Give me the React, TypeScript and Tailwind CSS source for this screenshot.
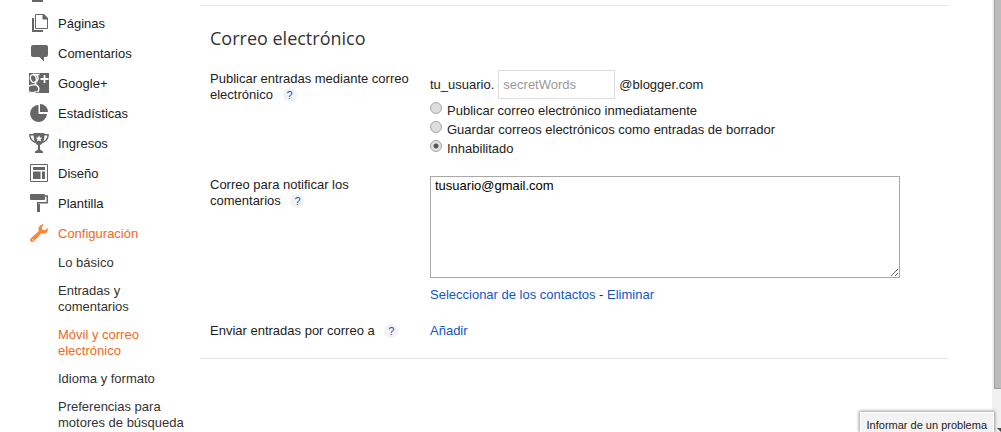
import { useState } from "react";
import type { ReactNode } from "react";

type NavItem = {
  label: string;
  icon: ReactNode;
  active?: boolean;
};

const navItems: NavItem[] = [
  {
    label: "Páginas",
    icon: (
      <>
        <path d="M3 5h2v12h9v2H3z" fill="currentColor" />
        <path d="M6.500 1.500h8l4 4v10h-12z" fill="none" stroke="currentColor" />
        <path d="M13.500 1H15l4 4v1.500h-5.500z" fill="currentColor" />
      </>
    ),
  },
  {
    label: "Comentarios",
    icon: (
      <path
        d="M4 2h13a2 2 0 0 1 2 2v8a2 2 0 0 1-2 2h-2v4.500L10.500 14H4a2 2 0 0 1-2-2V4a2 2 0 0 1 2-2z"
        fill="currentColor"
      />
    ),
  },
  {
    label: "Google+",
    icon: (
      <>
        <path d="M0 0h20v20H0z" fill="currentColor" />
        <g fill="none" stroke="#fff">
          <ellipse cx="4.300" cy="5.500" rx="2.900" ry="4" strokeWidth="1.300" transform="rotate(-14 4.300 5.500)" />
          <path d="M4 1.500h6.500M7.500 2c2.200 2.200 1.800 4.600.2 6.200-1.900 1.900-2 2.600.2 4.200 2.300 1.700 2.600 4.600.6 6.800" strokeWidth="1.500" />
          <path d="M0 13.200c2-1.200 4.200-1.400 6.500-1.200M0 18.800c2.200 1 5.500.9 7.500-.6" strokeWidth="1.300" />
          <path d="M15.500 2v8M11.500 6h8" strokeWidth="1.800" />
        </g>
      </>
    ),
  },
  {
    label: "Estadísticas",
    icon: (
      <>
        <path d="M9.500 2v9H18a8.500 8.500 0 1 1-8.500-9z" fill="currentColor" />
        <path d="M11 1a8 8 0 0 1 8 8h-8z" fill="currentColor" />
      </>
    ),
  },
  {
    label: "Ingresos",
    icon: (
      <>
        <path d="M4.500 0h11c0 6-1 11-4.500 12v4.500l3 2V20H6v-1.500l3-2V12C5.500 11 4.500 6 4.500 0z" fill="currentColor" />
        <path d="M5 1.700H.8C1 5 2.500 8 6.500 9.500M15 1.700h4.200C19 5 17.500 8 13.500 9.500" fill="none" stroke="currentColor" strokeWidth="1.400" />
        <path d="m10 2.300 1 2.100 2.300.3-1.700 1.600.5 2.300L10 7.400 7.900 8.600l.5-2.300-1.700-1.600 2.300-.3z" fill="#fff" />
      </>
    ),
  },
  {
    label: "Diseño",
    icon: (
      <>
        <path d="M1.500 1.500h17v17h-17z" fill="none" stroke="currentColor" />
        <path d="M4 4h12v3H4zM4 8.500h7.500V16H4zM13 8.500h3V16h-3z" fill="currentColor" />
      </>
    ),
  },
  {
    label: "Plantilla",
    icon: (
      <>
        <path d="M2 1h13a1 1 0 0 1 1 1v4a1 1 0 0 1-1 1H2a1 1 0 0 1-1-1V2a1 1 0 0 1 1-1zM8 11h3v8H8z" fill="currentColor" />
        <path d="M16 3h2.300v6.800H8.700V13" fill="none" stroke="currentColor" strokeWidth="1.500" />
      </>
    ),
  },
  {
    label: "Configuración",
    active: true,
    icon: (
      <path
        d="M15 1.200 12.800 4l.4 2.500 2.600.7 3-2.200c.5 3-1.400 5.600-4.300 5.700-1 0-1.600-.3-2.200-.5L5.500 17.600c-1 1.600-2.600 1.900-3.700.9-1.200-1.100-.9-2.800.6-3.800l7.300-6.500C8.500 4 11.500.8 15 1.200zM3.600 16a.8.8 0 1 0 0 1.600.8.8 0 0 0 0-1.600z"
        fill="currentColor"
        fillRule="evenodd"
      />
    ),
  },
];

const subItems = [
  { label: "Lo básico" },
  { label: "Entradas y comentarios" },
  { label: "Móvil y correo electrónico", active: true },
  { label: "Idioma y formato" },
  { label: "Preferencias para motores de búsqueda" },
];

const publishOptions = [
  { value: "now", label: "Publicar correo electrónico inmediatamente" },
  { value: "draft", label: "Guardar correos electrónicos como entradas de borrador" },
  { value: "off", label: "Inhabilitado" },
];

function HelpLink() {
  return (
    <a
      href="#ayuda"
      className="ml-1.5 inline-block size-[14px] rounded-full bg-[#f2f2f2] text-center text-[11px] leading-[14px] text-[#15c]"
    >
      ?
    </a>
  );
}

function Sidebar() {
  return (
    <nav className="w-[200px] shrink-0 pl-[29px]">
      {/* tail of the entry scrolled out above */}
      <div className="h-[9px]">
        <div className="ml-[3px] h-0.5 w-[11px] bg-[#666]" />
      </div>
      <ul>
        {navItems.map((item) => (
          <li key={item.label}>
            <a
              href="#menu"
              className={`flex h-[30px] items-center gap-[9px] ${item.active ? "text-[#f26722]" : "text-[#222]"}`}
            >
              <svg
                viewBox="0 0 20 20"
                className={`mb-0.5 size-5 shrink-0 ${item.active ? "text-[#ff8533]" : "text-[#666]"}`}
              >
                {item.icon}
              </svg>
              {item.label}
            </a>
          </li>
        ))}
      </ul>
      <ul className="mt-1.5 flex flex-col gap-3 pr-3 pl-[29px]">
        {subItems.map((item) => (
          <li key={item.label}>
            <a href="#submenu" className={`block ${item.active ? "text-[#f26722]" : "text-[#333]"}`}>
              {item.label}
            </a>
          </li>
        ))}
      </ul>
    </nav>
  );
}

function EmailSettings() {
  const [publish, setPublish] = useState("off");
  const [word, setWord] = useState("");
  const [notify, setNotify] = useState("tusuario@gmail.com");

  return (
    <section className="mt-[5px] border-y border-[#e5e5e5] px-[10px] pt-5 pb-[19px]">
      <h2 className="font-['Open_Sans',sans-serif] text-lg leading-6 text-[#333]">Correo electrónico</h2>

      <div className="mt-5 flex">
        <div className="w-[220px] shrink-0 pt-px pr-4">
          <label htmlFor="secret">Publicar entradas mediante correo electrónico</label> <HelpLink />
        </div>
        <div className="flex-1">
          <div className="flex items-center gap-1">
            <span>tu_usuario.</span>
            <input
              id="secret"
              type="text"
              placeholder="secretWords"
              value={word}
              onChange={(e) => setWord(e.target.value)}
              className="h-[29px] w-[117px] border border-[#ddd] px-1 outline-none placeholder:text-[#999]"
            />
            <span>@blogger.com</span>
          </div>
          <div className="mt-0.5">
            {publishOptions.map((opt) => (
              <label key={opt.value} className="flex h-[19px] items-start gap-[5px]">
                <input
                  type="radio"
                  name="publish"
                  value={opt.value}
                  checked={publish === opt.value}
                  onChange={() => setPublish(opt.value)}
                  className="mt-px size-3 shrink-0 appearance-none rounded-full border border-[#a5a5a5] bg-[#dedede] checked:bg-[radial-gradient(circle,#555_0_2px,#e2e2e2_3px)]"
                />
                <span className="pt-0.5">{opt.label}</span>
              </label>
            ))}
          </div>
        </div>
      </div>

      <div className="mt-[18px] flex">
        <div className="w-[220px] shrink-0 pt-px pr-16">
          <label htmlFor="notify">Correo para notificar los comentarios</label> <HelpLink />
        </div>
        <div className="min-w-0 flex-1">
          <textarea
            id="notify"
            value={notify}
            onChange={(e) => setNotify(e.target.value)}
            className="block h-[102px] w-full max-w-[470px] border border-[#a9a9a9] px-1 py-px text-black outline-none"
          />
          <p className="mt-[9px]">
            <a href="#contactos" className="text-[#15c]">Seleccionar de los contactos</a> -{" "}
            <a href="#eliminar" className="text-[#15c]">Eliminar</a>
          </p>
        </div>
      </div>

      <div className="mt-5 flex">
        <div className="w-[220px] shrink-0">
          Enviar entradas por correo a <HelpLink />
        </div>
        <a href="#anadir" className="text-[#15c]">Añadir</a>
      </div>
    </section>
  );
}

export default function App() {
  return (
    <div className="relative flex h-screen overflow-hidden bg-white font-['Liberation_Sans',Arial,sans-serif] text-[13px] leading-4 text-[#222]">
      <Sidebar />
      <main className="mr-11 min-w-0 flex-1">
        <EmailSettings />
      </main>

      {/* page scrollbar */}
      <div className="flex w-[9px] shrink-0 flex-col justify-between bg-[#f0f0f0] pl-0.5">
        <div className="h-[90%] border-b border-l border-[#a0a0a0] bg-[#bcbcbc]" />
        <svg viewBox="0 0 7 4" className="h-1 w-[7px] text-[#444]">
          <path d="M3 0h4v4z" fill="currentColor" />
        </svg>
      </div>

      <button
        type="button"
        className="absolute right-[7px] bottom-0 h-5 border border-b-0 border-white bg-[#f3f3f3] px-1.5 pt-1 text-[11px] leading-4 shadow-[0_0_3px_1px_#999]"
      >
        Informar de un problema
      </button>
    </div>
  );
}
